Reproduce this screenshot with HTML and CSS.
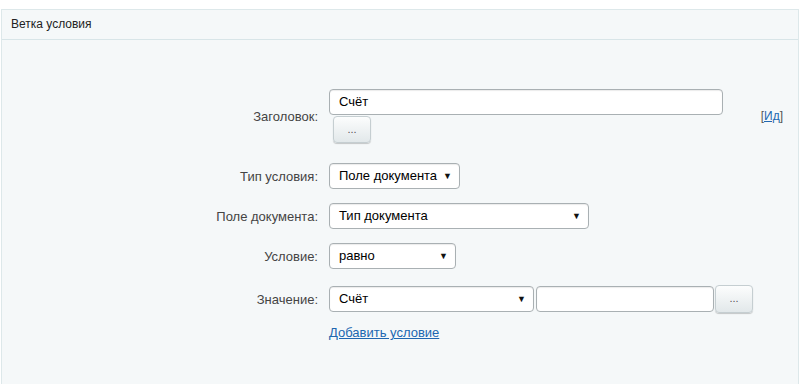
FILE: index.html
```html
<!DOCTYPE html>
<html lang="ru">
  <head>
    <meta charset="UTF-8" />
    <title>Ветка условия</title>
    <link rel="stylesheet" href="styles.css">
  </head>
  <body>
    <div class="panel">
      <div class="panel-header">Ветка условия</div>
      <div class="panel-body">
        <div class="row row-title">
          <div class="label">Заголовок:</div>
          <div class="field field-stack">
            <div class="input input-title">Счёт</div>
            <div class="btn btn-under">...</div>
          </div>
          <div class="extra"><span class="bracket">[</span><a href="#">Ид</a><span class="bracket">]</span></div>
        </div>

        <div class="row">
          <div class="label">Тип условия:</div>
          <div class="field">
            <div class="select sel-type"><span>Поле документа</span><span class="arrow">&#9660;</span></div>
          </div>
        </div>

        <div class="row">
          <div class="label">Поле документа:</div>
          <div class="field">
            <div class="select sel-field"><span>Тип документа</span><span class="arrow">&#9660;</span></div>
          </div>
        </div>

        <div class="row row-cond">
          <div class="label">Условие:</div>
          <div class="field">
            <div class="select sel-cond"><span>равно</span><span class="arrow">&#9660;</span></div>
          </div>
        </div>

        <div class="row row-value">
          <div class="label">Значение:</div>
          <div class="field field-inline">
            <div class="select sel-value"><span>Счёт</span><span class="arrow">&#9660;</span></div>
            <div class="input input-value"></div>
            <div class="btn btn-side">...</div>
          </div>
        </div>

        <div class="row">
          <div class="label"></div>
          <div class="field">
            <a href="#" class="add-link">Добавить условие</a>
          </div>
        </div>
      </div>
    </div>
  </body>
</html>
```

FILE: styles.css
```css
body {
  margin: 0;
  padding: 0;
  background-color: #ffffff;
  font-family: "Liberation Sans", Arial, sans-serif;
  font-size: 13px;
  color: #333333;
}

.panel {
  margin: 9px 1px 0 1px;
  height: 380px;
  border: 1px solid #dde8ea;
  border-bottom: none;
  background-color: #f5f8f9;
}

.panel-header {
  height: 29px;
  line-height: 28px;
  padding-left: 9px;
  font-size: 12px;
  color: #222222;
  border-bottom: 1px solid #d8e5e8;
}

.panel-body {
  padding-top: 49px;
}

.row {
  display: grid;
  grid-template-columns: 316px 1fr 48px;
  column-gap: 11px;
  align-items: center;
  margin-bottom: 14px;
}

.row-title {
  margin-bottom: 20px;
}

.row-cond {
  margin-bottom: 16px;
}

.row-value {
  margin-bottom: 12px;
}

.label {
  text-align: right;
  color: #444444;
}

.field {
  display: flex;
  align-items: center;
}

.field-stack {
  flex-direction: column;
  align-items: flex-start;
  gap: 1px;
}

.field-inline {
  gap: 2px;
}

.input,
.select {
  box-sizing: border-box;
  height: 26px;
  background-color: #ffffff;
  border: 1px solid #a9b0b3;
  border-radius: 4px;
  box-shadow: inset 0 1px 1px rgba(0, 0, 0, 0.08);
  color: #000000;
  padding: 0 9px;
  line-height: 24px;
}

.input-title {
  width: 394px;
}

.input-value {
  width: 178px;
}

.select {
  display: flex;
  justify-content: space-between;
  align-items: center;
  padding-right: 7px;
}

.select .arrow {
  font-size: 9px;
  color: #111111;
}

.sel-type {
  width: 131px;
}

.sel-field {
  width: 260px;
}

.sel-cond {
  width: 127px;
}

.sel-value {
  width: 205px;
}

.btn {
  box-sizing: border-box;
  width: 38px;
  height: 28px;
  border: 1px solid #c5ced1;
  border-radius: 4px;
  background: linear-gradient(#fcfdfd, #e2e8ea);
  box-shadow: 0 1px 1px rgba(0, 0, 0, 0.2);
  color: #555555;
  font-size: 11px;
  text-align: center;
  line-height: 24px;
}

.btn-under {
  margin-left: 4px;
  height: 27px;
}

.btn-side {
  margin-left: -1px;
}

.extra {
  font-size: 12px;
  color: #555555;
  justify-self: end;
  padding-right: 15px;
}

.extra a {
  color: #2067b0;
}

.add-link {
  color: #2067b0;
  font-size: 13px;
  text-decoration: underline;
}
```
